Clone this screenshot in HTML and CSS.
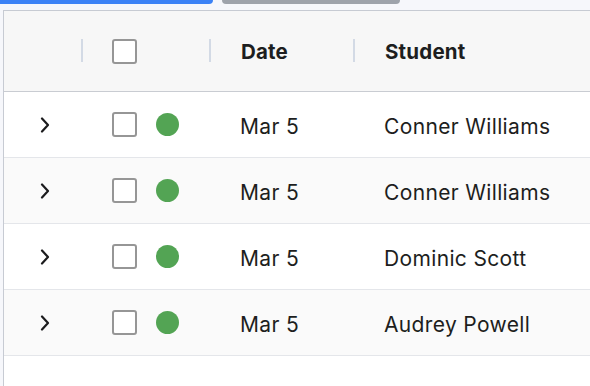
FILE: index.html
```html
<!DOCTYPE html>
<html>
<head>
<meta charset="utf-8">
<link rel="stylesheet" href="styles.css">
</head>
<body>
<div class="tabs">
  <div class="tab tab-active"></div>
  <div class="tab tab-gray"></div>
</div>
<div class="table">
  <div class="row head">
    <div class="cell c-expand"></div>
    <div class="cell c-select div"><span class="box"></span></div>
    <div class="cell c-date div text">Date</div>
    <div class="cell c-student div text">Student</div>
  </div>
  <div class="row">
    <div class="cell c-expand"><svg class="chev" width="10" height="16" viewBox="0 0 10 16"><path d="M2 1.5 L8 8 L2 14.5" fill="none" stroke="#1b1b1d" stroke-width="2.2" stroke-linecap="round" stroke-linejoin="round"/></svg></div>
    <div class="cell c-select"><span class="box"></span><span class="dot"></span></div>
    <div class="cell c-date text">Mar 5</div>
    <div class="cell c-student text">Conner Williams</div>
  </div>
  <div class="row alt">
    <div class="cell c-expand"><svg class="chev" width="10" height="16" viewBox="0 0 10 16"><path d="M2 1.5 L8 8 L2 14.5" fill="none" stroke="#1b1b1d" stroke-width="2.2" stroke-linecap="round" stroke-linejoin="round"/></svg></div>
    <div class="cell c-select"><span class="box"></span><span class="dot"></span></div>
    <div class="cell c-date text">Mar 5</div>
    <div class="cell c-student text">Conner Williams</div>
  </div>
  <div class="row">
    <div class="cell c-expand"><svg class="chev" width="10" height="16" viewBox="0 0 10 16"><path d="M2 1.5 L8 8 L2 14.5" fill="none" stroke="#1b1b1d" stroke-width="2.2" stroke-linecap="round" stroke-linejoin="round"/></svg></div>
    <div class="cell c-select"><span class="box"></span><span class="dot"></span></div>
    <div class="cell c-date text">Mar 5</div>
    <div class="cell c-student text">Dominic Scott</div>
  </div>
  <div class="row alt">
    <div class="cell c-expand"><svg class="chev" width="10" height="16" viewBox="0 0 10 16"><path d="M2 1.5 L8 8 L2 14.5" fill="none" stroke="#1b1b1d" stroke-width="2.2" stroke-linecap="round" stroke-linejoin="round"/></svg></div>
    <div class="cell c-select"><span class="box"></span><span class="dot"></span></div>
    <div class="cell c-date text">Mar 5</div>
    <div class="cell c-student text">Audrey Powell</div>
  </div>
  <div class="filler"></div>
</div>
</body>
</html>
```
FILE: styles.css
```css
html, body {
  margin: 0;
  padding: 0;
  background: #f6f7fb;
  font-family: "Inter", "Liberation Sans", sans-serif;
  color: #1d1e20;
  overflow: hidden;
}
.tabs {
  display: flex;
  gap: 9px;
  height: 4px;
  margin-bottom: 6px;
}
.tab {
  height: 4px;
  border-radius: 0 0 6px 6px;
}
.tab-active {
  width: 213px;
  background: #3b82f6;
  border-radius: 0 0 6px 0;
}
.tab-gray {
  width: 178px;
  background: #9ea3ab;
}
.table {
  margin-left: 3px;
  background: #ffffff;
  border-left: 1px solid #c7cbd3;
  border-top: 1px solid #c7cbd3;
}
.row {
  display: grid;
  grid-template-columns: 77px 128px 144px 1fr;
  height: 65px;
  border-bottom: 1px solid #e4e6ea;
  font-size: 21px;
  letter-spacing: 0.35px;
  white-space: nowrap;
}
.row.alt {
  background: #fafafa;
}
.row.head {
  height: 80px;
  background: #f7f7f7;
  border-bottom: 1px solid #c9ccd2;
  font-weight: 700;
  font-size: 20.5px;
  letter-spacing: 0.2px;
}
.cell {
  display: flex;
  align-items: center;
  padding-left: 31px;
  position: relative;
}
.text {
  padding-top: 3px;
}
.head .text {
  padding-top: 1px;
  padding-left: 32px;
}
.head .c-select {
  padding-left: 31px;
}
.c-expand {
  padding-left: 36px;
}
.div::before {
  content: "";
  position: absolute;
  left: 0;
  top: 28px;
  width: 2px;
  height: 23px;
  background: #d3dae5;
}
.box {
  display: inline-block;
  box-sizing: border-box;
  width: 25px;
  height: 25px;
  border: 2px solid #969696;
  border-radius: 3px;
  background: #fff;
}
.dot {
  display: inline-block;
  width: 23px;
  height: 23px;
  border-radius: 50%;
  background: #53a454;
  margin-left: 19px;
}
.chev {
  display: block;
}
.filler {
  height: 30px;
}
```
